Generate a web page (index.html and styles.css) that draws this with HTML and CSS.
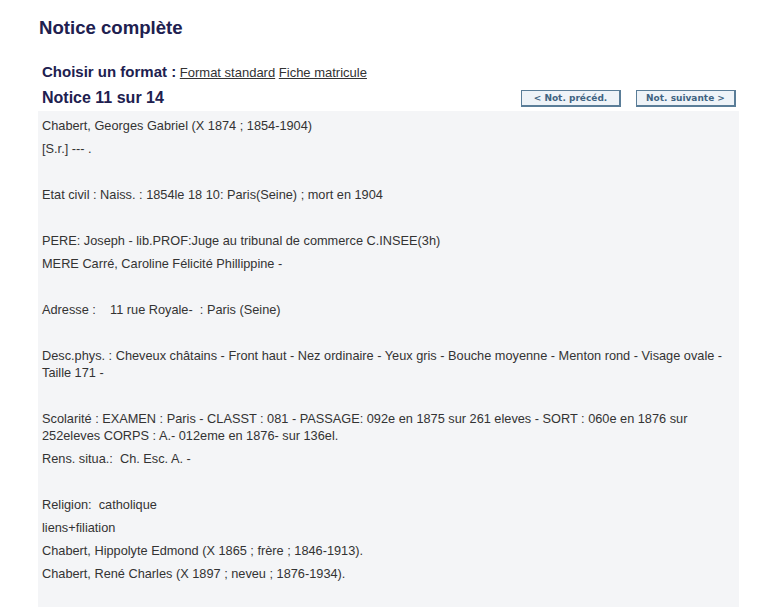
FILE: index.html
```html
<!DOCTYPE html>
<html lang="fr">
<head>
    <meta charset="UTF-8">
    <title>Notice complète</title>
    <link rel="stylesheet" href="styles.css">
</head>
<body>
    <div class="page">
        <h1 class="page-title">Notice complète</h1>

        <div class="format-bar">
            <span class="format-label">Choisir un format :</span>
            <a href="#">Format standard</a>
            <a href="#">Fiche matricule</a>
        </div>

        <div class="notice-bar">
            <span class="notice-count">Notice 11 sur 14</span>
            <div class="nav-buttons">
                <button class="nav-button">&lt; Not. précéd.</button>
                <button class="nav-button">Not. suivante &gt;</button>
            </div>
        </div>

        <div class="notice-body">
            <p>Chabert, Georges Gabriel (X 1874 ; 1854-1904)</p>
            <p>[S.r.] --- .</p>
            <p>&nbsp;</p>
            <p>Etat civil : Naiss. : 1854le 18 10: Paris(Seine) ; mort en 1904</p>
            <p>&nbsp;</p>
            <p>PERE: Joseph - lib.PROF:Juge au tribunal de commerce C.INSEE(3h)</p>
            <p>MERE Carré, Caroline Félicité Phillippine -</p>
            <p>&nbsp;</p>
            <p>Adresse : &nbsp;&nbsp; 11 rue Royale- &nbsp;: Paris (Seine)</p>
            <p>&nbsp;</p>
            <p>Desc.phys. : Cheveux châtains - Front haut - Nez ordinaire - Yeux gris - Bouche moyenne - Menton rond - Visage ovale - Taille 171 -</p>
            <p>&nbsp;</p>
            <p>Scolarité : EXAMEN : Paris - CLASST : 081 - PASSAGE: 092e en 1875 sur 261 eleves - SORT : 060e en 1876 sur 252eleves CORPS : A.- 012eme en 1876- sur 136el.</p>
            <p>Rens. situa.: &nbsp;Ch. Esc. A. -</p>
            <p>&nbsp;</p>
            <p>Religion: &nbsp;catholique</p>
            <p>liens+filiation</p>
            <p>Chabert, Hippolyte Edmond (X 1865 ; frère ; 1846-1913).</p>
            <p>Chabert, René Charles (X 1897 ; neveu ; 1876-1934).</p>
        </div>
    </div>
</body>
</html>
```

FILE: styles.css
```css
body {
    margin: 0;
    padding: 0;
    background-color: #fff;
    font-family: "Liberation Sans", Arial, sans-serif;
    color: #333;
}

.page {
    width: 701px;
    padding: 17px 0 0 38px;
}

.page-title {
    margin: 0 0 0 1px;
    font-size: 18.6px;
    font-weight: bold;
    color: #20204f;
}

.format-bar {
    margin-top: 24px;
    padding-left: 4px;
    font-size: 13px;
}

.format-bar a {
    color: #333;
    text-decoration: underline;
}

.format-label {
    font-size: 15px;
    font-weight: bold;
    color: #20204f;
}

.notice-bar {
    display: flex;
    justify-content: space-between;
    align-items: center;
    padding: 0 3px 0 4px;
    margin-top: 6px;
    height: 24px;
}

.notice-count {
    font-size: 16px;
    font-weight: bold;
    color: #20204f;
}

.nav-buttons {
    display: flex;
    gap: 15px;
}

.nav-button {
    width: 100px;
    height: 17px;
    padding: 0;
    background-color: #eef3f8;
    border: 1px solid #5a7d98;
    border-right-width: 2px;
    border-bottom-width: 2px;
    font-family: "DejaVu Sans", Verdana, sans-serif;
    font-size: 9px;
    font-weight: bold;
    color: #3f6382;
    cursor: pointer;
}

.notice-body {
    margin-top: 1px;
    padding: 3px 4px 4px;
    background-color: #f4f5f7;
    font-size: 12.75px;
    min-height: 496px;
    box-sizing: border-box;
}

.notice-body p {
    margin: 0;
    padding: 3px 0;
    line-height: 17px;
}
```
